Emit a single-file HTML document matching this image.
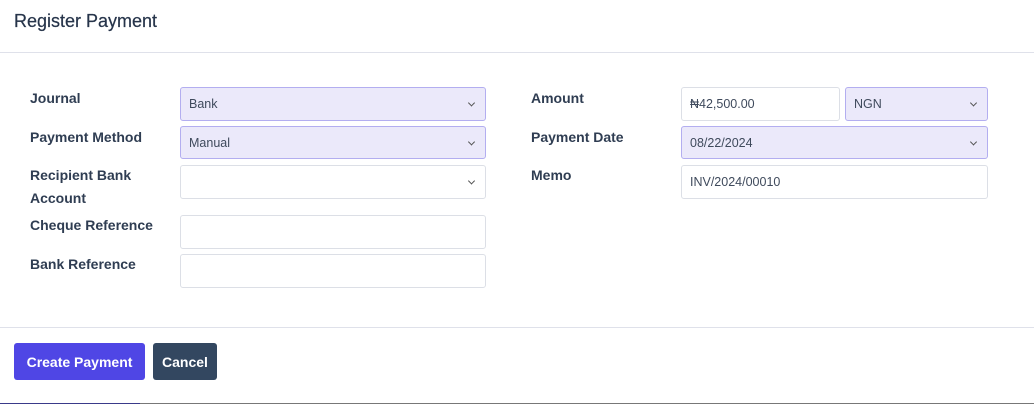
<!DOCTYPE html>
<html><head><meta charset="utf-8"><style>
*{box-sizing:border-box;margin:0;padding:0}
body{width:1034px;height:404px;background:#fff;font-family:"Liberation Sans",sans-serif;position:relative;overflow:hidden;color:#334155}
.abs{position:absolute}
h1{position:absolute;left:14px;top:11px;font-size:18px;font-weight:normal;color:#26344a;-webkit-text-stroke:0.2px #26344a}
.hr{position:absolute;left:0;width:1034px;height:1px;background:#dfe1ea}
.lbl{position:absolute;font-size:14px;font-weight:bold;color:#2f3d52;line-height:23px}
.f{position:absolute;border:1px solid #dcdfe6;border-radius:3px;background:#fff;font-size:12.5px;color:#3f4a5c;padding-left:8px;display:flex;align-items:center}
.s{background:#ebe9fa;border-color:#b3aef0}
.c{position:absolute;right:11px;top:50%;width:5px;height:5px;border-right:1.2px solid #555;border-bottom:1.2px solid #555;transform:translateY(-70%) rotate(45deg)}
.btn{position:absolute;top:343px;height:37px;border-radius:3px;color:#fff;font-weight:bold;font-size:14px;display:flex;align-items:center;justify-content:center}
</style></head><body>
<h1>Register Payment</h1>
<div class="hr" style="top:52px"></div>

<div class="lbl" style="left:30px;top:87px">Journal</div>
<div class="lbl" style="left:30px;top:126px">Payment Method</div>
<div class="lbl" style="left:30px;top:164px">Recipient Bank<br>Account</div>
<div class="lbl" style="left:30px;top:214px">Cheque Reference</div>
<div class="lbl" style="left:30px;top:253px">Bank Reference</div>

<div class="f s" style="left:180px;top:87px;width:306px;height:34px">Bank<span class="c"></span></div>
<div class="f s" style="left:180px;top:126px;width:306px;height:33px">Manual<span class="c"></span></div>
<div class="f" style="left:180px;top:165px;width:306px;height:34px"><span class="c"></span></div>
<div class="f" style="left:180px;top:215px;width:306px;height:34px"></div>
<div class="f" style="left:180px;top:254px;width:306px;height:34px"></div>

<div class="lbl" style="left:531px;top:87px">Amount</div>
<div class="lbl" style="left:531px;top:126px">Payment Date</div>
<div class="lbl" style="left:531px;top:164px">Memo</div>

<div class="f" style="left:681px;top:87px;width:159px;height:34px">₦42,500.00</div>
<div class="f s" style="left:845px;top:87px;width:143px;height:34px">NGN<span class="c"></span></div>
<div class="f s" style="left:681px;top:126px;width:307px;height:33px">08/22/2024<span class="c"></span></div>
<div class="f" style="left:681px;top:165px;width:307px;height:34px">INV/2024/00010</div>

<div class="hr" style="top:327px"></div>
<div class="btn" style="left:14px;width:131px;background:#4f46e5">Create Payment</div>
<div class="btn" style="left:153px;width:64px;background:#334760">Cancel</div>
<div class="abs" style="left:0;top:403px;width:140px;height:1px;background:#3a3a8a"></div>
<div class="abs" style="left:140px;top:403px;width:894px;height:1px;background:#777"></div>
</body></html>
